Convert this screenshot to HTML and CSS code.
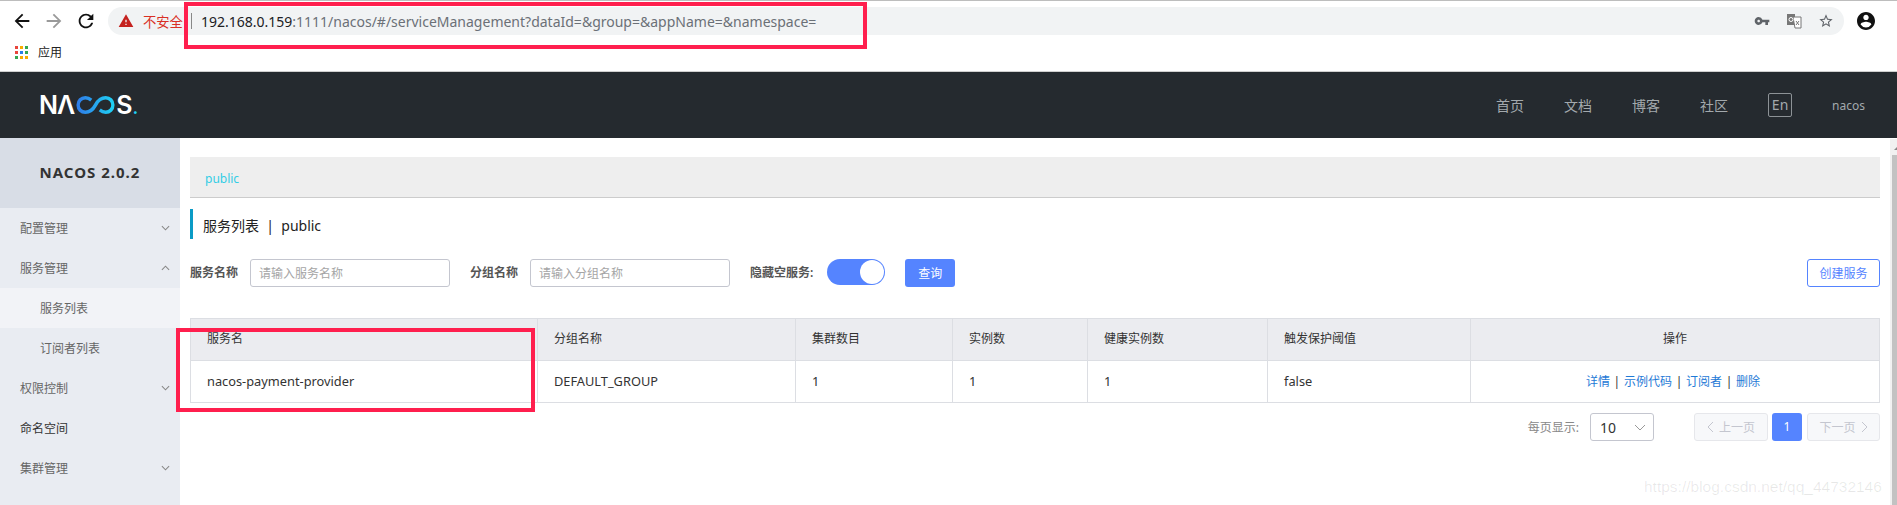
FILE: index.html
```html
<!DOCTYPE html>
<html lang="zh-CN">
<head>
  <meta charset="UTF-8">
  <meta name="viewport" content="width=device-width, initial-scale=1.0">
  <title>Nacos</title>
  <link rel="stylesheet" href="styles.css">
</head>
<body>

  <!-- browser toolbar -->
  <div class="chrome">
    <div class="toolbar">
      <svg class="tb-icon" viewBox="0 0 24 24"><path d="M20 11H7.83l5.59-5.59L12 4l-8 8 8 8 1.41-1.41L7.83 13H20v-2z"/></svg>
      <svg class="tb-icon disabled" viewBox="0 0 24 24"><path d="M12 4l-1.41 1.41L16.17 11H4v2h12.17l-5.58 5.59L12 20l8-8z"/></svg>
      <svg class="tb-icon" viewBox="0 0 24 24"><path d="M17.65 6.35A7.958 7.958 0 0 0 12 4c-4.42 0-7.99 3.58-7.99 8s3.57 8 7.99 8c3.73 0 6.84-2.55 7.73-6h-2.08A5.99 5.99 0 0 1 12 18c-3.31 0-6-2.69-6-6s2.69-6 6-6c1.66 0 3.14.69 4.22 1.78L13 11h7V4l-2.35 2.35z"/></svg>
      <div class="omnibox">
        <svg class="warn" viewBox="0 0 24 24"><path d="M1 21h22L12 2 1 21zm12-3h-2v-2h2v2zm0-4h-2v-4h2v4z"/></svg>
        <span class="insecure">不安全</span>
        <span class="omni-sep"></span>
        <span class="url"><b>192.168.0.159</b>:1111/nacos/#/serviceManagement?dataId=&amp;group=&amp;appName=&amp;namespace=</span>
        <div class="omni-actions">
          <svg class="omni-icon" viewBox="0 0 24 24"><path d="M12.65 10A5.99 5.99 0 0 0 7 6c-3.31 0-6 2.69-6 6s2.69 6 6 6a5.99 5.99 0 0 0 5.65-4H17v4h4v-4h2v-4H12.65zM7 14c-1.1 0-2-.9-2-2s.9-2 2-2 2 .9 2 2-.9 2-2 2z"/></svg>
          <svg class="omni-icon" viewBox="0 0 16 16">
            <rect x="1" y="1" width="8" height="11" fill="#777"/>
            <path d="M7 4h8v11H9z" fill="#fff" stroke="#777"/>
            <circle cx="5" cy="6.5" r="2" fill="none" stroke="#fff"/>
            <path d="M10 8l3 4M13 8l-3 4" stroke="#777" fill="none"/>
          </svg>
          <svg class="omni-icon" viewBox="0 0 24 24"><path d="M22 9.24l-7.19-.62L12 2 9.19 8.63 2 9.24l5.46 4.73L5.82 21 12 17.27 18.18 21l-1.63-7.03L22 9.24zM12 15.4l-3.76 2.27 1-4.28-3.32-2.88 4.38-.38L12 6.1l1.71 4.04 4.38.38-3.32 2.88 1 4.28L12 15.4z"/></svg>
        </div>
      </div>
      <svg class="account" viewBox="2 2 20 20"><path d="M12 2C6.48 2 2 6.48 2 12s4.48 10 10 10 10-4.48 10-10S17.52 2 12 2zm0 3c1.66 0 3 1.34 3 3s-1.34 3-3 3-3-1.34-3-3 1.34-3 3-3zm0 14.2a7.2 7.2 0 0 1-6-3.22c.03-1.99 4-3.08 6-3.08 1.99 0 5.97 1.09 6 3.08a7.2 7.2 0 0 1-6 3.22z"/></svg>
    </div>
    <div class="bookmarks">
      <div class="apps">
        <i class="r"></i><i class="y"></i><i class="g"></i>
        <i class="r"></i><i class="b"></i><i class="g"></i>
        <i class="g"></i><i class="y"></i><i class="y"></i>
      </div>
      <span>应用</span>
    </div>
  </div>

  <!-- nacos header -->
  <header class="header">
    <div class="logo" aria-label="NACOS">
      <span class="logo-na">NΛ</span>
      <svg class="logo-mark" viewBox="0 0 46 20" preserveAspectRatio="none">
        <defs>
          <linearGradient id="inf" x1="0" x2="1" y1="0" y2="0">
            <stop offset="0" stop-color="#2f7de8"/>
            <stop offset="1" stop-color="#1fd0f5"/>
          </linearGradient>
        </defs>
        <path d="M18 4.5C15.5 2.5 13 2 11 2 6 2 2.500 5.500 2.500 10S6 18 11 18c6 0 10-4.500 12-8s6-8 12-8c5 0 8.500 3.500 8.500 8S40 18 35 18c-2 0-4.500-.5-7-2.500" fill="none" stroke="url(#inf)" stroke-width="4"/>
      </svg>
      <span>S<em>.</em></span>
    </div>
    <nav class="nav">
      <a>首页</a>
      <a>文档</a>
      <a>博客</a>
      <a>社区</a>
      <a class="lang">En</a>
      <a class="user">nacos</a>
    </nav>
  </header>

  <div class="main">
    <aside class="sidebar">
      <div class="side-title">NACOS 2.0.2</div>
      <div class="side-item">配置管理
        <svg class="chev" viewBox="0 0 10 6"><path d="M1 1l4 4 4-4"/></svg>
      </div>
      <div class="side-item">服务管理
        <svg class="chev" viewBox="0 0 10 6"><path d="M1 5l4-4 4 4"/></svg>
      </div>
      <div class="side-item sub active">服务列表</div>
      <div class="side-item sub">订阅者列表</div>
      <div class="side-item">权限控制
        <svg class="chev" viewBox="0 0 10 6"><path d="M1 1l4 4 4-4"/></svg>
      </div>
      <div class="side-item strong">命名空间</div>
      <div class="side-item">集群管理
        <svg class="chev" viewBox="0 0 10 6"><path d="M1 1l4 4 4-4"/></svg>
      </div>
    </aside>

    <section class="content">
      <div class="ns-bar"><a>public</a></div>
      <h1 class="page-title">服务列表&nbsp; |&nbsp; public</h1>

      <div class="filters">
        <label class="f-label">服务名称</label>
        <input class="f-input" type="text" placeholder="请输入服务名称">
        <label class="f-label second">分组名称</label>
        <input class="f-input" type="text" placeholder="请输入分组名称">
        <label class="f-label third">隐藏空服务:</label>
        <div class="switch"><span class="knob"></span></div>
        <button type="button" class="btn-primary">查询</button>
        <button type="button" class="btn-create">创建服务</button>
      </div>

      <table class="services">
        <colgroup>
          <col class="c-name"><col class="c-group"><col class="c-cluster"><col class="c-inst">
          <col class="c-healthy"><col class="c-protect"><col class="c-ops">
        </colgroup>
        <thead>
          <tr>
            <th>服务名</th>
            <th>分组名称</th>
            <th>集群数目</th>
            <th>实例数</th>
            <th>健康实例数</th>
            <th>触发保护阈值</th>
            <th class="center">操作</th>
          </tr>
        </thead>
        <tbody>
          <tr>
            <td>nacos-payment-provider</td>
            <td>DEFAULT_GROUP</td>
            <td>1</td>
            <td>1</td>
            <td>1</td>
            <td>false</td>
            <td class="center ops"><a>详情</a> | <a>示例代码</a> | <a>订阅者</a> | <a>删除</a></td>
          </tr>
        </tbody>
      </table>

      <div class="pager">
        <span class="page-label">每页显示:</span>
        <div class="page-size">10
          <svg class="size-chev" viewBox="0 0 12 7"><path d="M1 1l5 5 5-5"/></svg>
        </div>
        <div class="page-btn prev">
          <svg class="pg-chev" viewBox="0 0 7 12"><path d="M6 1L1 6l5 5"/></svg>上一页
        </div>
        <div class="page-num">1</div>
        <div class="page-btn next">下一页
          <svg class="pg-chev" viewBox="0 0 7 12"><path d="M1 1l5 5-5 5"/></svg>
        </div>
      </div>
    </section>

    <div class="scrollbar">
      <span class="scroll-arrow"></span>
      <div class="scroll-thumb"></div>
    </div>
  </div>

  <!-- annotations drawn over the screenshot -->
  <div class="mark mark-url"></div>
  <div class="mark mark-name"></div>
  <div class="watermark">https://blog.csdn.net/qq_44732146</div>

</body>
</html>
```

FILE: styles.css
```css
* {
  box-sizing: border-box;
}

html, body {
  margin: 0;
  height: 505px;
  overflow: hidden;
}

body {
  position: relative;
  font-family: "Noto Sans", "Noto Sans CJK SC", sans-serif;
  font-size: 12px;
  color: #333;
  background: #fff;
}

/* browser toolbar */
.chrome {
  height: 72px;
  border-top: 1px solid #bdbdbd;
  border-bottom: 1px solid #cfcfcf;
}

.toolbar {
  display: flex;
  align-items: center;
  height: 39px;
  padding-left: 11px;
}

.tb-icon {
  width: 22px;
  height: 22px;
  margin-right: 10px;
  fill: #111;
}

.tb-icon.disabled {
  fill: #9a9a9a;
}

.omnibox {
  display: flex;
  align-items: center;
  width: 1736px;
  height: 28px;
  margin-left: 1px;
  margin-top: 1px;
  padding-left: 10px;
  border-radius: 14px;
  background: #f1f3f4;
}

.warn {
  width: 16px;
  height: 16px;
  fill: #c5221f;
  flex: none;
}

.insecure {
  margin-left: 9px;
  font-size: 13.300px;
  color: #d93025;
}

.omni-sep {
  width: 1px;
  height: 16px;
  margin-left: 8px;
  background: #888;
}

.url {
  margin-left: 9px;
  font-size: 14px;
  color: #6b7077;
  white-space: nowrap;
}

.url b {
  font-weight: 400;
  color: #202124;
}

.omni-actions {
  display: flex;
  align-items: center;
  gap: 16px;
  margin-left: auto;
  margin-right: 10px;
}

.omni-icon {
  width: 16px;
  height: 16px;
  fill: #5f6368;
}

.account {
  width: 18px;
  height: 18px;
  margin-left: 13px;
  fill: #111;
  flex: none;
}

.bookmarks {
  display: flex;
  align-items: center;
  gap: 10px;
  height: 31px;
  padding-left: 15px;
  padding-bottom: 7px;
  font-size: 12px;
  color: #222;
}

.apps {
  display: grid;
  grid-template-columns: repeat(3, 3px);
  grid-auto-rows: 3px;
  gap: 2px;
}

.apps i {
  display: block;
}

.apps .r { background: #e8453c; }
.apps .y { background: #f9ab00; }
.apps .g { background: #34a853; }
.apps .b { background: #2a7ee8; }

/* nacos header */
.header {
  display: flex;
  align-items: center;
  height: 66px;
  padding: 0 32px 0 39px;
  background: #252a2f;
}

.logo {
  display: flex;
  align-items: center;
  font-family: "Inter", "Noto Sans", sans-serif;
  font-size: 25px;
  font-weight: 600;
  color: #fff;
  line-height: 1;
}

.logo-na {
  letter-spacing: -1px;
}

.logo-mark {
  width: 39px;
  height: 18px;
  margin: 0 1px 0 2px;
}

.logo em {
  font-style: normal;
  color: #1fd0f5;
  font-size: 18px;
}

.nav {
  display: flex;
  align-items: center;
  margin-left: auto;
  gap: 40px;
  font-size: 14px;
  color: #a3a9ad;
}

.nav .lang {
  width: 24px;
  height: 24px;
  border: 1px solid #8d9296;
  border-radius: 2px;
  line-height: 21px;
  text-align: center;
}

.nav .user {
  font-size: 12px;
}

/* page */
.main {
  display: flex;
  height: 367px;
}

.sidebar {
  flex: none;
  width: 180px;
  background: #e9ecf2;
}

.side-title {
  height: 70px;
  padding-top: 23px;
  text-align: center;
  font-size: 15px;
  font-weight: 700;
  line-height: 22px;
  letter-spacing: 1px;
  background: #d8dde6;
}

.side-item {
  display: flex;
  align-items: center;
  justify-content: space-between;
  height: 40px;
  padding: 0 10px 0 20px;
  color: #666;
}

.side-item.sub {
  padding-left: 40px;
}

.side-item.active {
  background: #f2f3f7;
}

.side-item.strong {
  color: #333;
}

.chev {
  width: 9px;
  height: 6px;
  fill: none;
  stroke: #888;
  stroke-width: 1.200;
}

.content {
  flex: 1;
  padding: 19px 10px 0;
}

.ns-bar {
  height: 41px;
  padding-left: 15px;
  line-height: 44px;
  border-bottom: 1px solid #ccc;
  background: #eee;
  color: #33cde5;
}

.page-title {
  height: 30px;
  margin: 11px 0 0;
  padding-left: 10px;
  border-left: 3px solid #0a9bc6;
  font-size: 14px;
  font-weight: 400;
  line-height: 33px;
  color: #222;
}

.filters {
  display: flex;
  align-items: flex-start;
  height: 28px;
  margin-top: 20px;
}

.f-label {
  font-weight: 600;
  line-height: 27px;
  color: #555;
  margin-right: 12px;
}

.f-label.second {
  margin-left: 20px;
  margin-right: 12px;
}

.f-label.third {
  margin-left: 20px;
  margin-right: 14px;
}

.f-input {
  width: 200px;
  height: 28px;
  padding: 0 8px;
  border: 1px solid #c4c6cf;
  border-radius: 3px;
  font-family: inherit;
  font-size: 12px;
  outline: none;
}

.f-input::placeholder {
  color: #a5a5a5;
}

.switch {
  display: flex;
  justify-content: flex-end;
  width: 58px;
  height: 26px;
  padding: 1px;
  border-radius: 13px;
  background: #5584ff;
}

.knob {
  width: 24px;
  height: 24px;
  border-radius: 50%;
  background: #fff;
}

.btn-primary {
  width: 50px;
  height: 28px;
  margin-left: 20px;
  border: none;
  border-radius: 3px;
  background: #5584ff;
  color: #fff;
  font-family: inherit;
  font-size: 12px;
}

.btn-create {
  width: 73px;
  height: 28px;
  margin-left: auto;
  border: 1px solid #5584ff;
  border-radius: 3px;
  background: #fff;
  color: #5584ff;
  font-family: inherit;
  font-size: 12px;
}

.services {
  width: 100%;
  margin-top: 31px;
  border-collapse: collapse;
  table-layout: fixed;
}

.c-name { width: 347px; }
.c-group { width: 258px; }
.c-cluster { width: 157px; }
.c-inst { width: 135px; }
.c-healthy { width: 180px; }
.c-protect { width: 203px; }

.services th,
.services td {
  height: 42px;
  padding: 0 16px;
  border: 1px solid #dcdee3;
  font-weight: 400;
  text-align: left;
}

.services th {
  padding-bottom: 3px;
  background: #ebecf0;
}

.services td {
  padding-bottom: 2px;
  font-size: 12.800px;
}

.services .center {
  text-align: center;
}

.services .ops {
  padding-right: 20px;
  font-size: 12px;
  word-spacing: 0.600px;
}

.ops a {
  color: #1f7ad6;
}

.pager {
  display: flex;
  align-items: center;
  height: 28px;
  margin-top: 10px;
  justify-content: flex-end;
}

.page-label {
  color: #888;
  margin-right: 11px;
}

.page-size {
  display: flex;
  align-items: center;
  justify-content: space-between;
  width: 64px;
  height: 28px;
  padding: 0 7px 0 9px;
  border: 1px solid #c4c6cf;
  border-radius: 3px;
  font-size: 14px;
}

.size-chev {
  width: 12px;
  height: 7px;
  fill: none;
  stroke: #999;
}

.page-btn {
  display: flex;
  align-items: center;
  justify-content: center;
  gap: 5px;
  width: 73px;
  height: 28px;
  border: 1px solid #e6e7eb;
  border-radius: 3px;
  background: #f7f8fa;
  color: #c4c6cf;
}

.page-btn.prev {
  width: 74px;
  margin-left: 40px;
}

.pg-chev {
  width: 7px;
  height: 12px;
  fill: none;
  stroke: #c4c6cf;
}

.page-num {
  width: 30px;
  height: 28px;
  margin: 0 5px 0 4px;
  border-radius: 3px;
  background: #5584ff;
  color: #fff;
  line-height: 28px;
  text-align: center;
}

.scrollbar {
  flex: none;
  position: relative;
  width: 7px;
  margin-top: 1px;
  background: #f1f1f1;
}

.scroll-arrow {
  display: block;
  width: 0;
  height: 0;
  margin: 8px 0 0 4px;
  border-left: 3px solid transparent;
  border-bottom: 3px solid #888;
}

.scroll-thumb {
  height: 350px;
  margin: 5px 0 0 2px;
  background: #c2c2c2;
}

/* annotations */
.mark {
  position: absolute;
  border: 4px solid #ff1f4e;
}

.mark-url {
  left: 184px;
  top: 2px;
  width: 683px;
  height: 47px;
}

.mark-name {
  left: 176px;
  top: 328px;
  width: 359px;
  height: 84px;
}

.watermark {
  position: absolute;
  left: 1644px;
  top: 478px;
  font-family: "Liberation Sans", sans-serif;
  font-size: 15.500px;
  color: rgba(0, 0, 0, 0.09);
  white-space: nowrap;
}
```
